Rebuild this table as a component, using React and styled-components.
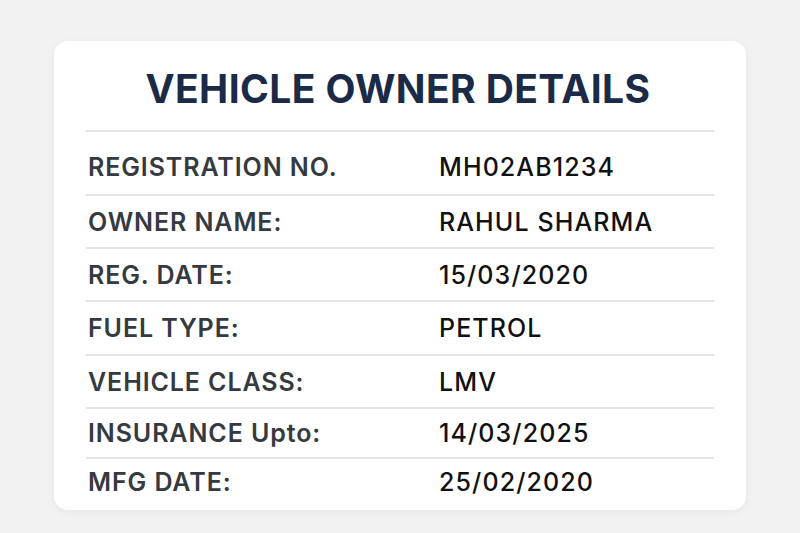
import React from 'react';
import styled, { createGlobalStyle } from 'styled-components';

const GlobalStyle = createGlobalStyle`
  html, body {
    margin: 0;
    padding: 0;
    background: #f2f2f2;
  }
  body {
    font-family: Inter, "Noto Sans", "Liberation Sans", sans-serif;
  }
`;

const Page = styled.div`
  width: 800px;
  height: 533px;
  padding: 41px 0 0 54px;
  box-sizing: border-box;
`;

const Card = styled.section`
  width: 692px;
  height: 469px;
  box-sizing: border-box;
  padding: 0 32px;
  background: #ffffff;
  border-radius: 14px;
  box-shadow: 0 2px 10px rgba(0, 0, 0, 0.05);
  display: flex;
  flex-direction: column;
`;

const Title = styled.h1`
  margin: 0;
  height: 91px;
  flex: none;
  display: flex;
  align-items: center;
  justify-content: center;
  padding: 6px 4px 0 0;
  box-sizing: border-box;
  font-size: 39px;
  font-weight: 700;
  color: #1b2b47;
  letter-spacing: 0.4px;
  border-bottom: 2px solid #e5e5e5;
`;

const Row = styled.div`
  display: grid;
  grid-template-columns: 353px 1fr;
  align-items: center;
  flex: none;
  height: ${p => p.$h}px;
  padding-top: ${p => p.$pt || 0}px;
  box-sizing: border-box;
  border-bottom: ${p => (p.$last ? 'none' : '2px solid #e5e5e5')};
`;

const Label = styled.span`
  padding-left: 2px;
  font-size: 25px;
  font-weight: 600;
  letter-spacing: 0.9px;
  color: #343a40;
`;

const Value = styled.span`
  font-size: 25px;
  font-weight: 500;
  letter-spacing: 1.1px;
  color: #111111;
`;

const rows = [
  ['REGISTRATION NO.', 'MH02AB1234', 64, 8],
  ['OWNER NAME:', 'RAHUL SHARMA', 53],
  ['REG. DATE:', '15/03/2020', 53],
  ['FUEL TYPE:', 'PETROL', 54],
  ['VEHICLE CLASS:', 'LMV', 53],
  ['INSURANCE Upto:', '14/03/2025', 50],
  ['MFG DATE:', '25/02/2020', 46],
];

export default function App() {
  return (
    <>
      <GlobalStyle />
      <Page>
        <Card>
          <Title>VEHICLE OWNER DETAILS</Title>
          {rows.map(([label, value, h, pt], i) => (
            <Row key={label} $h={h} $pt={pt} $last={i === rows.length - 1}>
              <Label>{label}</Label>
              <Value>{value}</Value>
            </Row>
          ))}
        </Card>
      </Page>
    </>
  );
}
